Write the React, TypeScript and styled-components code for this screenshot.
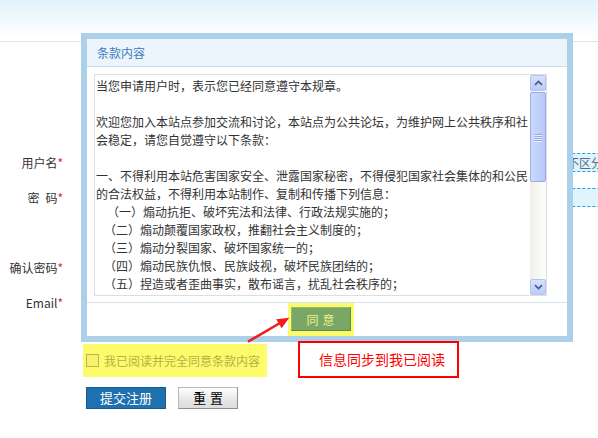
import styled, { createGlobalStyle } from 'styled-components'

const GlobalStyle = createGlobalStyle`
  html, body {
    margin: 0;
    padding: 0;
    background: #fff;
  }
  body {
    font-family: "Noto Sans CJK SC", "Liberation Sans", sans-serif;
    font-size: 12px;
    color: #333;
  }
  * {
    box-sizing: border-box;
  }
`

const Page = styled.div`
  position: relative;
  width: 598px;
  height: 438px;
  overflow: hidden;
`

const TopBand = styled.div`
  height: 42px;
  background: linear-gradient(#e2f3fc, #fff 38px);
  border-bottom: 1px solid #dbe5ec;
`

const Form = styled.div`
  padding-top: 103px;
`

const Row = styled.div`
  display: flex;
  align-items: center;
  height: 35px;
`

const Label = styled.div`
  flex-shrink: 0;
  width: 63px;
  text-align: right;
  color: #333;
  font-size: 12px;
  white-space: nowrap;
`

const Star = styled.span`
  color: #e8202a;
`

const Input = styled.div`
  flex-shrink: 0;
  width: 300px;
  height: 22px;
  margin-left: 27px;
  border: 1px solid #ccc;
`

const Tip = styled.div`
  flex-shrink: 0;
  margin-left: 172px;
  width: 140px;
  height: 19px;
  padding-left: 5px;
  line-height: 17px;
  background: #e1f3fc;
  border-top: 1px dashed #1ba2e6;
  border-bottom: 1px dashed #1ba2e6;
  color: #5b6d80;
  font-size: 12px;
  white-space: nowrap;
`

const AgreeBar = styled.div`
  display: flex;
  align-items: center;
  gap: 5px;
  width: 184px;
  height: 33px;
  margin: 24px 0 0 83px;
  padding-left: 3px;
  background: #fdfb6a;
  color: #b4b04a;
  font-size: 12px;
`

const CheckBox = styled.span`
  display: inline-block;
  width: 13px;
  height: 13px;
  border: 1px solid #b9b65a;
  background: #f6f26c;
`

const ButtonRow = styled.div`
  display: flex;
  gap: 12px;
  margin: 10px 0 0 86px;
`

const SubmitButton = styled.button`
  width: 80px;
  height: 22px;
  padding: 0;
  border: 1px solid #15598e;
  background: #1e70ae;
  color: #fff;
  font-family: inherit;
  font-size: 13px;
  line-height: 20px;
`

const ResetButton = styled.button`
  width: 60px;
  height: 22px;
  padding: 0;
  border: 1px solid #b8b8b8;
  border-right-color: #8e8e8e;
  border-bottom-color: #8e8e8e;
  background: linear-gradient(#fefefe, #e6e6e6 60%, #dcdcdc);
  color: #000;
  font-family: inherit;
  font-size: 13px;
  line-height: 20px;
  letter-spacing: 4px;
  text-indent: 4px;
`

const Modal = styled.div`
  position: absolute;
  left: 81px;
  top: 33px;
  width: 492px;
  height: 309px;
  border: 6px solid #add0e9;
  background: #fff;
  display: flex;
  flex-direction: column;
`

const ModalHeader = styled.div`
  height: 28px;
  padding-left: 10px;
  line-height: 27px;
  background: #edf5fc;
  border-bottom: 1px solid #c9ddec;
  color: #3a7cc0;
  font-size: 12px;
`

const ModalBody = styled.div`
  padding: 7px 20px 0 7px;
`

const TextBox = styled.div`
  display: flex;
  height: 222px;
  border: 1px solid #dedede;
`

const TextLines = styled.div`
  flex: 1;
  overflow: hidden;
  padding: 2px 0 0 1px;
  line-height: 18px;
  font-size: 12px;
  color: #333;
`

const Line = styled.div<{ $indent?: number }>`
  height: 18px;
  white-space: pre;
  padding-left: ${(p) => p.$indent || 0}px;
`

const Scrollbar = styled.div`
  flex-shrink: 0;
  width: 16px;
  display: flex;
  flex-direction: column;
  background: linear-gradient(90deg, #f1efe8, #fdfdfb);
`

const ScrollButton = styled.div`
  height: 16px;
  display: flex;
  align-items: center;
  justify-content: center;
  border: 1px solid #b3c4f0;
  border-radius: 2px;
  background: linear-gradient(#d6e2fe, #b9cbf8);
`

const Thumb = styled.div`
  height: 90px;
  margin-top: 1px;
  display: flex;
  flex-direction: column;
  align-items: center;
  justify-content: center;
  gap: 1px;
  border: 1px solid #98ade6;
  border-radius: 2px;
  background: linear-gradient(90deg, #cbd9fe, #b7c8f8);
`

const Grip = styled.span`
  width: 7px;
  height: 1px;
  background: #8ea4e2;
  box-shadow: 0 1px 0 #eef2fe;
`

const Track = styled.div`
  flex: 1;
`

const ModalFooter = styled.div`
  flex: 1;
  margin-top: 6px;
  display: flex;
  justify-content: center;
  padding: 0 13px 0 0;
  border-top: 1px solid #d3e4ef;
`

const Highlight = styled.div`
  padding: 4px 3px;
  background: #fdfb6a;
`

const AgreeButton = styled.button`
  width: 60px;
  height: 24px;
  padding: 0;
  border: 1px solid #8fba7c;
  border-right-color: #5c8a4a;
  border-bottom-color: #5c8a4a;
  background: #79a766;
  color: #f3f08a;
  font-family: inherit;
  font-size: 12px;
  letter-spacing: 4px;
  text-indent: 4px;
`

const Note = styled.div`
  position: absolute;
  left: 298px;
  top: 341px;
  width: 161px;
  height: 37px;
  padding-left: 19px;
  border: 2px solid #f00;
  color: #f00;
  font-size: 14px;
  line-height: 33px;
`

const Arrow = styled.svg`
  position: absolute;
  left: 240px;
  top: 305px;
`

const Chevron = ({ down }: { down?: boolean }) => (
  <svg width="9" height="6" viewBox="0 0 9 6">
    <path
      d={down ? 'M1 1.2 L4.5 4.6 L8 1.2' : 'M1 4.8 L4.5 1.4 L8 4.8'}
      fill="none"
      stroke="#4a5e86"
      strokeWidth="1.8"
    />
  </svg>
)

const terms: { text: string; indent?: number }[] = [
  { text: '当您申请用户时，表示您已经同意遵守本规章。' },
  { text: '' },
  { text: '欢迎您加入本站点参加交流和讨论，本站点为公共论坛，为维护网上公共秩序和社' },
  { text: '会稳定，请您自觉遵守以下条款：' },
  { text: '' },
  { text: '一、不得利用本站危害国家安全、泄露国家秘密，不得侵犯国家社会集体的和公民' },
  { text: '的合法权益，不得利用本站制作、复制和传播下列信息：' },
  { text: '（一）煽动抗拒、破坏宪法和法律、行政法规实施的；', indent: 11 },
  { text: '（二）煽动颠覆国家政权，推翻社会主义制度的；', indent: 8 },
  { text: '（三）煽动分裂国家、破坏国家统一的；', indent: 8 },
  { text: '（四）煽动民族仇恨、民族歧视，破坏民族团结的；', indent: 8 },
  { text: '（五）捏造或者歪曲事实，散布谣言，扰乱社会秩序的；', indent: 8 },
  { text: '（六）宣扬封建迷信、淫秽、色情、赌博、暴力、凶杀、恐怖、教唆犯罪的；', indent: 8 },
]

const fields = [
  { label: '用户名', tip: '不区分大小写' },
  { label: '密\u2002码', tip: '' },
  { label: '', tip: null },
  { label: '确认密码', tip: null },
  { label: 'Email', tip: null },
]

const App = () => {
  return (
    <Page>
      <GlobalStyle />
      <TopBand />
      <Form>
        {fields.map((f, i) => (
          <Row key={i}>
            <Label>
              {f.label}
              {f.label && <Star>*</Star>}
            </Label>
            <Input />
            {f.tip !== null && <Tip>{f.tip}</Tip>}
          </Row>
        ))}
        <AgreeBar>
          <CheckBox />
          我已阅读并完全同意条款内容
        </AgreeBar>
        <ButtonRow>
          <SubmitButton>提交注册</SubmitButton>
          <ResetButton>重置</ResetButton>
        </ButtonRow>
      </Form>

      <Modal>
        <ModalHeader>条款内容</ModalHeader>
        <ModalBody>
          <TextBox>
            <TextLines>
              {terms.map((t, i) => (
                <Line key={i} $indent={t.indent}>
                  {t.text}
                </Line>
              ))}
            </TextLines>
            <Scrollbar>
              <ScrollButton>
                <Chevron />
              </ScrollButton>
              <Thumb>
                <Grip />
                <Grip />
                <Grip />
                <Grip />
              </Thumb>
              <Track />
              <ScrollButton>
                <Chevron down />
              </ScrollButton>
            </Scrollbar>
          </TextBox>
        </ModalBody>
        <ModalFooter>
          <Highlight>
            <AgreeButton>同意</AgreeButton>
          </Highlight>
        </ModalFooter>
      </Modal>

      <Arrow width="60" height="45" viewBox="0 0 60 45">
        <line x1="8" y1="36.7" x2="40" y2="18" stroke="#f21c1c" strokeWidth="2.6" />
        <polygon points="49.3,12.7 41.6,23.2 36.2,14.2" fill="#f21c1c" />
      </Arrow>
      <Note>信息同步到我已阅读</Note>
    </Page>
  )
}

export default App
